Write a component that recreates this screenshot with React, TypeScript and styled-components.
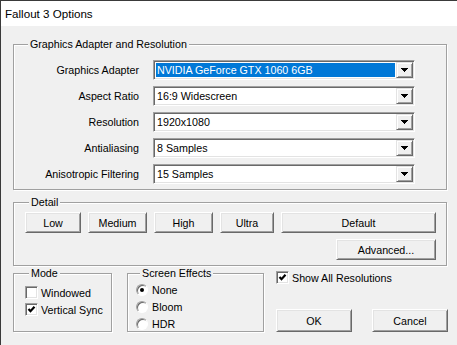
import React from "react"
import styled, { createGlobalStyle } from "styled-components"

const GlobalStyle = createGlobalStyle`
  html, body {
    margin: 0;
    padding: 0;
    background: #f0f0f0;
  }
  body {
    font-family: "Liberation Sans", Arial, sans-serif;
    font-size: 10.7px;
    color: #000;
  }
`

const rows = [
  { label: "Graphics Adapter", value: "NVIDIA GeForce GTX 1060 6GB", active: true },
  { label: "Aspect Ratio", value: "16:9 Widescreen" },
  { label: "Resolution", value: "1920x1080" },
  { label: "Antialiasing", value: "8 Samples" },
  { label: "Anisotropic Filtering", value: "15 Samples" },
]

const presets = [
  { name: "Low", w: 56 },
  { name: "Medium", w: 59 },
  { name: "High", w: 59 },
  { name: "Ultra", w: 54 },
  { name: "Default", w: 155 },
]

function DropArrow() {
  return (
    <svg width="7" height="4" viewBox="0 0 7 4" shapeRendering="crispEdges">
      <polygon points="0,0 7,0 3.5,4" fill="#000" />
    </svg>
  )
}

function Check() {
  return (
    <svg width="9" height="9" viewBox="0 0 9 9">
      <path d="M1.5 4 L3.5 6.2 L7.5 1.8" stroke="#000" strokeWidth="2.2" fill="none" />
    </svg>
  )
}

function Combo(props: { value: string; active?: boolean }) {
  const { value, active } = props
  return (
    <ComboBox>
      <ComboValue $active={active}>{value}</ComboValue>
      <DropButton>
        <DropArrow />
      </DropButton>
    </ComboBox>
  )
}

function CheckItem(props: { label: string; checked?: boolean }) {
  return (
    <OptionRow>
      <CheckBox>{props.checked && <Check />}</CheckBox>
      <span>{props.label}</span>
    </OptionRow>
  )
}

function RadioItem(props: { label: string; checked?: boolean }) {
  return (
    <OptionRow $gap={4}>
      <Radio $checked={props.checked} />
      <span>{props.label}</span>
    </OptionRow>
  )
}

export default function App() {
  return (
    <>
      <GlobalStyle />
      <Window>
        <TitleBar>Fallout 3 Options</TitleBar>
        <Body>
          <Group $pad="9px 10px 5px">
            <Legend>Graphics Adapter and Resolution</Legend>
            <SettingsGrid>
              {rows.map((r) => (
                <React.Fragment key={r.label}>
                  <RowLabel>{r.label}</RowLabel>
                  <Combo value={r.value} active={r.active} />
                </React.Fragment>
              ))}
            </SettingsGrid>
          </Group>

          <Group $pad="3px 10px 5px 11px" $top={6}>
            <Legend>Detail</Legend>
            <ButtonRow>
              {presets.map((p) => (
                <Button key={p.name} $w={p.w}>
                  {p.name}
                </Button>
              ))}
            </ButtonRow>
            <ButtonRow $end>
              <Button $w={100}>Advanced...</Button>
            </ButtonRow>
          </Group>

          <BottomRow>
            <Group $pad="4px 4px 0 11px" $w={99} $h={65}>
              <Legend>Mode</Legend>
              <CheckItem label="Windowed" />
              <CheckItem label="Vertical Sync" checked />
            </Group>
            <Group $pad="1px 4px 0 8px" $w={137} $h={65} $left={15}>
              <Legend>Screen Effects</Legend>
              <RadioItem label="None" checked />
              <RadioItem label="Bloom" />
              <RadioItem label="HDR" />
            </Group>
            <RightColumn>
              <CheckItem label="Show All Resolutions" checked />
              <DialogButtons>
                <Button $w={76} $h={23}>OK</Button>
                <Button $w={76} $h={23}>Cancel</Button>
              </DialogButtons>
            </RightColumn>
          </BottomRow>
        </Body>
      </Window>
    </>
  )
}

const Window = styled.div`
  width: 457px;
  height: 345px;
  box-sizing: border-box;
  border-top: 1px solid #3a3a3a;
  border-left: 1px solid #3a3a3a;
  background: #f0f0f0;
  overflow: hidden;
`
const TitleBar = styled.div`
  height: 25px;
  background: #fff;
  display: flex;
  align-items: center;
  padding-left: 4px;
  font-size: 11.6px;
  color: #000;
`
const Body = styled.div`
  padding: 12px 0 0 12px;
`
const Group = styled.fieldset<{ $pad: string; $top?: number; $left?: number; $w?: number; $h?: number }>`
  margin: ${(p) => p.$top || 0}px 0 0 ${(p) => p.$left || 0}px;
  padding: ${(p) => p.$pad};
  width: ${(p) => (p.$w ? `${p.$w}px` : "434px")};
  ${(p) => (p.$h ? `height: ${p.$h}px;` : "")}
  box-sizing: border-box;
  min-width: 0;
  border: 1px solid #a0a0a0;
  box-shadow: inset 1px 1px 0 #fff, 1px 1px 0 #fff;
`
const Legend = styled.legend`
  padding: 0 2px;
  margin-left: 4px;
  line-height: 13px;
  font-size: 10.7px;
  background: #f0f0f0;
`
const SettingsGrid = styled.div`
  display: grid;
  grid-template-columns: 115px 262px;
  column-gap: 14px;
  row-gap: 6px;
`
const RowLabel = styled.div`
  text-align: right;
  line-height: 20px;
  white-space: nowrap;
`
const ComboBox = styled.div`
  height: 20px;
  box-sizing: border-box;
  display: flex;
  background: #fff;
  border: 1px solid;
  border-color: #a0a0a0 #fff #fff #a0a0a0;
  box-shadow: inset 1px 1px 0 #696969, inset -1px -1px 0 #e3e3e3;
  padding: 1px;
`
const ComboValue = styled.div<{ $active?: boolean }>`
  flex: 1;
  margin: 1px;
  padding-left: 1px;
  line-height: 14px;
  white-space: nowrap;
  overflow: hidden;
  background: ${(p) => (p.$active ? "#0078d7" : "transparent")};
  color: ${(p) => (p.$active ? "#fff" : "#000")};
`
const DropButton = styled.div`
  width: 17px;
  height: 16px;
  box-sizing: border-box;
  display: flex;
  align-items: center;
  justify-content: center;
  background: #f0f0f0;
  border: 1px solid;
  border-color: #e3e3e3 #696969 #696969 #e3e3e3;
  box-shadow: inset 1px 1px 0 #fff, inset -1px -1px 0 #a0a0a0;
`
const ButtonRow = styled.div<{ $end?: boolean }>`
  display: flex;
  gap: 7px;
  justify-content: ${(p) => (p.$end ? "flex-end" : "flex-start")};
  margin-top: ${(p) => (p.$end ? 6 : 0)}px;
`
const Button = styled.div<{ $w: number; $h?: number }>`
  width: ${(p) => p.$w}px;
  height: ${(p) => p.$h || 21}px;
  box-sizing: border-box;
  display: flex;
  align-items: center;
  justify-content: center;
  background: #f0f0f0;
  border: 1px solid;
  border-color: #fff #696969 #696969 #fff;
  box-shadow: inset 1px 1px 0 #e3e3e3, inset -1px -1px 0 #a0a0a0;
`
const BottomRow = styled.div`
  display: flex;
  align-items: flex-start;
  margin-top: 1px;
`
const OptionRow = styled.div<{ $gap?: number }>`
  display: flex;
  align-items: center;
  gap: ${(p) => p.$gap ?? 3}px;
  height: 17px;
  white-space: nowrap;
`
const CheckBox = styled.div`
  width: 13px;
  height: 13px;
  box-sizing: border-box;
  flex: none;
  display: flex;
  align-items: center;
  justify-content: center;
  background: #fff;
  border: 1px solid;
  border-color: #a0a0a0 #fff #fff #a0a0a0;
  box-shadow: inset 1px 1px 0 #696969, inset -1px -1px 0 #e3e3e3;
`
const Radio = styled.div<{ $checked?: boolean }>`
  width: 12px;
  height: 12px;
  box-sizing: border-box;
  flex: none;
  border-radius: 50%;
  background: #fff;
  border: 1px solid;
  border-color: #a0a0a0 #fff #fff #a0a0a0;
  box-shadow: inset 1px 1px 0 #696969;
  display: flex;
  align-items: center;
  justify-content: center;
  &::after {
    content: "";
    width: 4px;
    height: 4px;
    border-radius: 50%;
    background: ${(p) => (p.$checked ? "#000" : "transparent")};
  }
`
const RightColumn = styled.div`
  margin-left: 12px;
  padding-top: 2px;
  display: flex;
  flex-direction: column;
`
const DialogButtons = styled.div`
  display: flex;
  gap: 20px;
  margin-top: 23px;
`
